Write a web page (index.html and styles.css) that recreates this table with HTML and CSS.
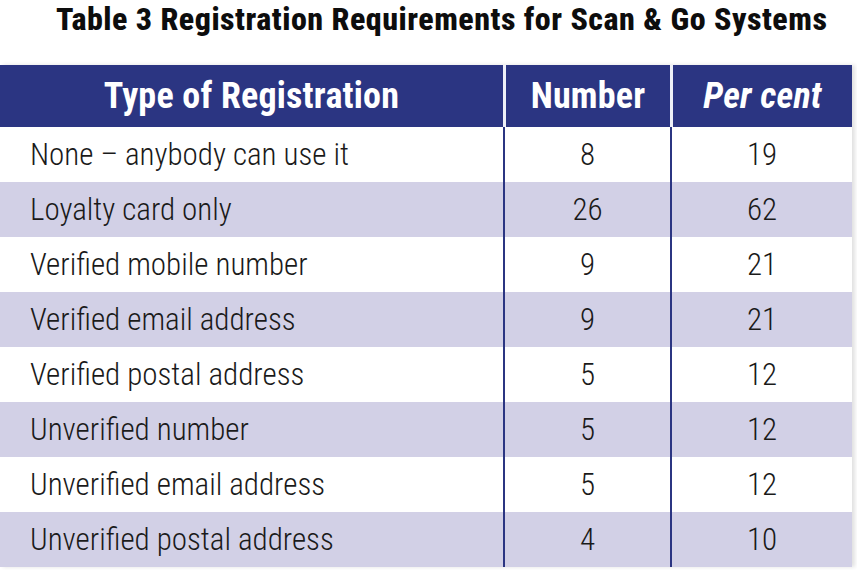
FILE: index.html
```html
<!DOCTYPE html>
<html>
<head>
<meta charset="utf-8">
<link rel="stylesheet" href="styles.css">
</head>
<body>
<h1 class="title">Table 3 Registration Requirements for Scan &amp; Go Systems</h1>
<div class="table">
  <div class="row head">
    <div class="cell c1">Type of Registration</div>
    <div class="cell c2">Number</div>
    <div class="cell c3"><em>Per cent</em></div>
  </div>
  <div class="row">
    <div class="cell c1">None – anybody can use it</div>
    <div class="cell c2">8</div>
    <div class="cell c3">19</div>
  </div>
  <div class="row alt">
    <div class="cell c1">Loyalty card only</div>
    <div class="cell c2">26</div>
    <div class="cell c3">62</div>
  </div>
  <div class="row">
    <div class="cell c1">Verified mobile number</div>
    <div class="cell c2">9</div>
    <div class="cell c3">21</div>
  </div>
  <div class="row alt">
    <div class="cell c1">Verified email address</div>
    <div class="cell c2">9</div>
    <div class="cell c3">21</div>
  </div>
  <div class="row">
    <div class="cell c1">Verified postal address</div>
    <div class="cell c2">5</div>
    <div class="cell c3">12</div>
  </div>
  <div class="row alt">
    <div class="cell c1">Unverified number</div>
    <div class="cell c2">5</div>
    <div class="cell c3">12</div>
  </div>
  <div class="row">
    <div class="cell c1">Unverified email address</div>
    <div class="cell c2">5</div>
    <div class="cell c3">12</div>
  </div>
  <div class="row alt">
    <div class="cell c1">Unverified postal address</div>
    <div class="cell c2">4</div>
    <div class="cell c3">10</div>
  </div>
</div>
</body>
</html>
```
FILE: styles.css
```css
html, body {
  margin: 0;
  padding: 0;
  background: #ffffff;
}
body {
  width: 857px;
  height: 570px;
  overflow: hidden;
  font-family: Roboto, "Liberation Sans", sans-serif;
  font-stretch: 75%;
}
.title {
  margin: 0;
  height: 65px;
  padding: 0 0 0 56px;
  font-size: 32px;
  line-height: 38px;
  font-weight: 800;
  letter-spacing: 0.5px;
  color: #0d0d0d;
  white-space: nowrap;
}
.table {
  width: 852px;
  box-shadow: 3px 0 4px rgba(0,0,0,0.12), inset 4px 0 3px -2px rgba(0,0,0,0.08);
}
.row {
  display: grid;
  grid-template-columns: 503px 167px 182px;
  height: 55px;
  background: #ffffff;
  color: #1a1a1a;
  font-size: 31px;
  font-weight: 300;
  letter-spacing: 0;
}
.row.alt {
  background: #d2d0e6;
}
.row.head {
  height: 62px;
  background: #2b3582;
  color: #ffffff;
  font-weight: 700;
  font-size: 36px;
  letter-spacing: 0.2px;
}
.cell {
  display: flex;
  align-items: center;
  white-space: nowrap;
}
.c1 {
  padding-left: 30px;
}
.c2, .c3 {
  justify-content: center;
  border-left: 2px solid #2b3582;
}
.head .c1 {
  justify-content: center;
  padding-left: 0;
}
.head .c2, .head .c3 {
  border-left: 3px solid #eef0f8;
}
.head em {
  font-style: italic;
}
```
